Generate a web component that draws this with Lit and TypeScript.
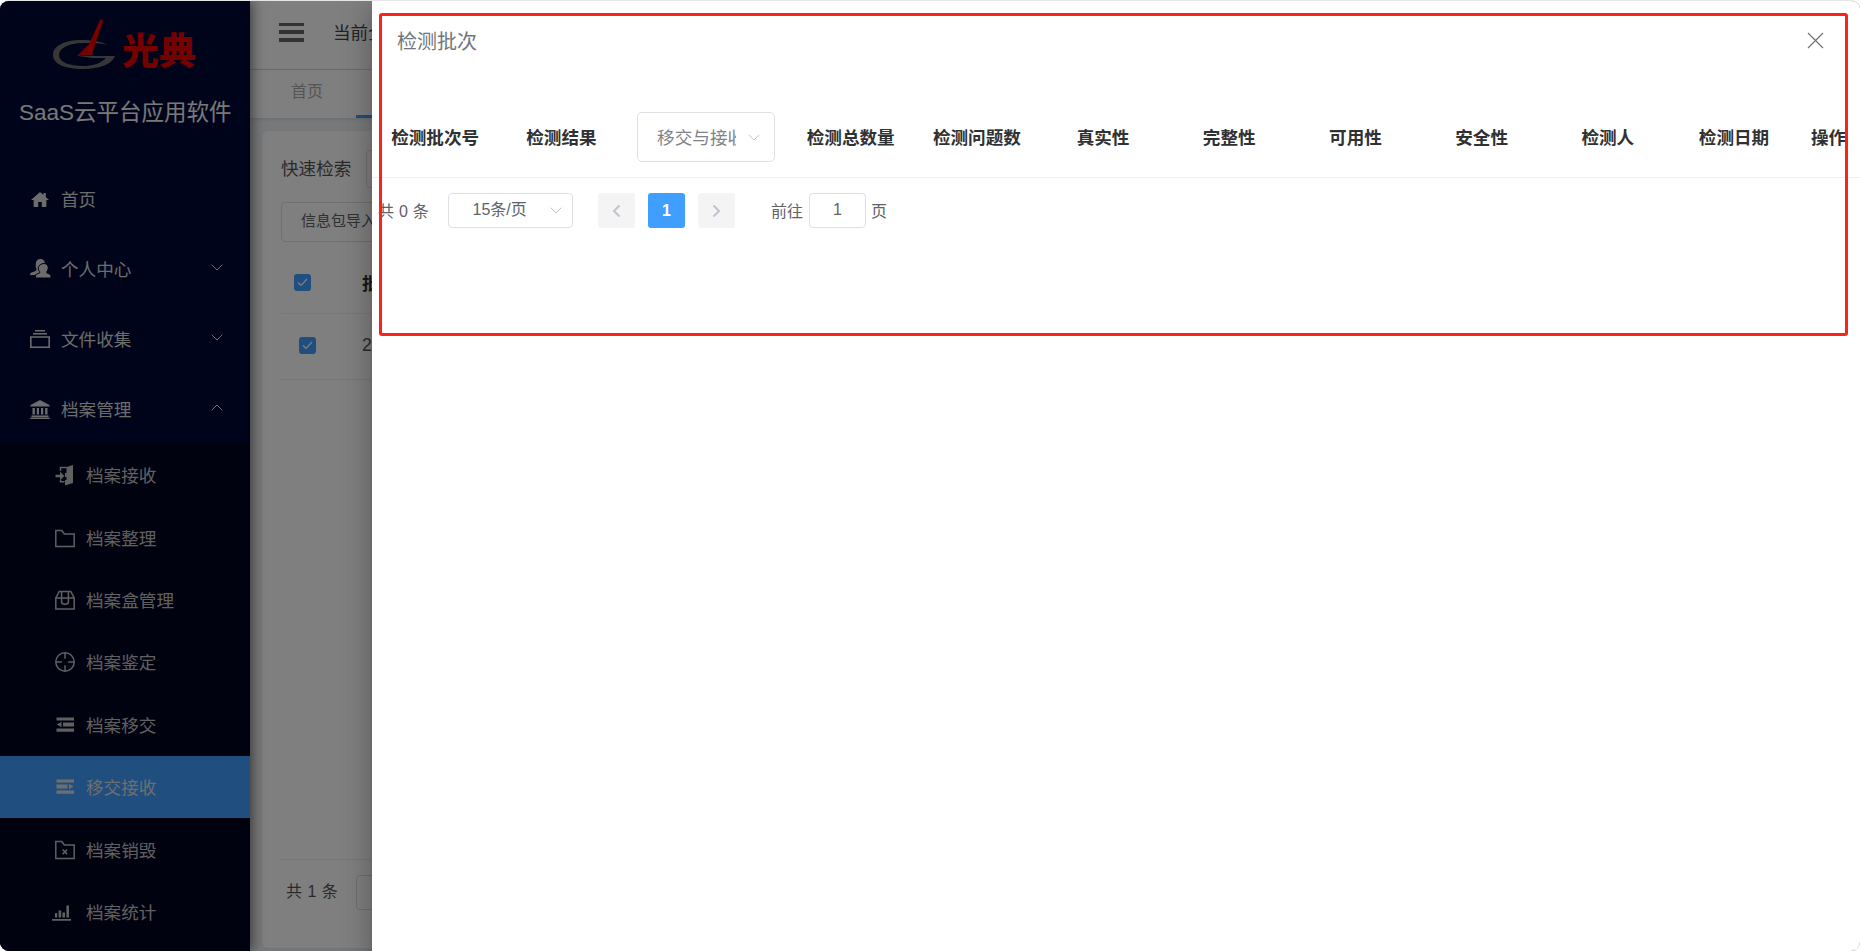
import { LitElement, html, css, svg } from "lit";
import { customElement } from "lit/decorators.js";

const I: Record<string, any> = {
  home: svg`<path fill="currentColor" d="M10 3 1 11h2.600v7h4.600v-5h3.600v5h4.600v-7H19l-3.200-2.900V4h-2.400v1.900z"/>`,
  user: svg`<path fill="currentColor" d="M10.500 0c2.700 0 4.500 2 4.500 4.800 0 1.600-.7 3.200-1.700 4.200v1.400c1 .4 1.700.8 2 1.400L5 16H0c-.2-1.200.6-2.100 2-2.700 1.600-.7 3.600-1.100 4.300-1.900V9.200C5.400 8.200 5.800 6.500 5.800 4.800 5.800 2 7.800 0 10.500 0z"/><path fill="currentColor" stroke="#00042a" stroke-width="1" d="M14 4.500c2.600 0 4.300 1.900 4.300 4.400 0 1.500-.6 2.900-1.500 3.800v1.200c1.700.8 4.200 1.200 4.200 3.100V19H5.500v-2c0-1.800 2.500-2.400 4.200-3.100v-1.200c-.9-.9-1.500-2.300-1.500-3.800 0-2.500 3.200-4.400 5.800-4.400z"/>`,
  stack: svg`<path fill="none" stroke="currentColor" stroke-width="1.600" d="M.8 8h18.400v10.200H.8zM3 4.800h14M5 1.800h10"/>`,
  bank: svg`<path fill="currentColor" d="M10 1 .5 6v1.500h19V6zM2.500 9h2.400v6.500H2.500zm4.300 0h2.200v6.500H6.800zm4.200 0h2.200v6.500H11zm4.100 0h2.400v6.500h-2.400zM1.500 16.500h17v1.400h-17zM.5 18.500h19V20H.5z"/>`,
  door: svg`<path fill="currentColor" d="M10 2.500 18 0v18l-8 2.500v-5.600h1.500V12H10V8h1.500V2.800zM5 6.800v3H.5v2.400H5v3l4.500-4.200z"/><path fill="none" stroke="currentColor" stroke-width="1.500" d="M11.500 2.500h-6V6M5.500 15v1.800h4"/>`,
  folder: svg`<path fill="none" stroke="currentColor" stroke-width="1.500" d="M.8 2.500v16h18.400V6h-9.800L6.800 2.500z"/>`,
  box: svg`<path fill="none" stroke="currentColor" stroke-width="1.500" d="M.8 8h18.400v11H.8zM.8 8l3.400-6.500h11.600L19.200 8M6.600 1.500V12c0 1.500 1 2.200 3.400 2.200s3.400-.7 3.400-2.200V1.500M6.600 8h6.800"/>`,
  target: svg`<circle cx="10" cy="10" r="9.200" fill="none" stroke="currentColor" stroke-width="1.500"/><path stroke="currentColor" stroke-width="1.500" d="M10 .8v6M10 13.200v6M.8 10h6M13.200 10h6"/>`,
  outdent: svg`<path fill="currentColor" d="M1.500 2.500h17.500v3H1.500zM8 7.500h11v4H8zM1.500 13.500H19v3.200H1.500zM6.500 6.800v5.500L2 9.500z"/>`,
  indent: svg`<path fill="currentColor" d="M1.500 2.500H19v3H1.500zM1.500 7.500h11v4h-11zM1.500 13.500H19v3.200H1.500zM14 6.800v5.500l4.500-2.800z"/>`,
  fx: svg`<path fill="none" stroke="currentColor" stroke-width="1.500" d="M.8 1.500v17h18.400V5H9.400L6.800 1.500z"/><path stroke="currentColor" stroke-width="1.500" d="m7.600 9.500 4.600 4.600M12.200 9.500l-4.600 4.600"/>`,
  chart: svg`<path fill="currentColor" d="M-3 17h19v1.800H-3zM0 11h2.200v4.500H0zM3.600 8.500h2.600v7H3.600zM7.400 10.500H10v5H7.400zM11.400 3.500H14v12h-2.600z"/>`,
};

const top1 = [
  { t: "首页", i: "home" },
  { t: "个人中心", i: "user", c: "d" },
  { t: "文件收集", i: "stack", c: "d" },
  { t: "档案管理", i: "bank", c: "u" },
];
const subs = [
  { t: "档案接收", i: "door" },
  { t: "档案整理", i: "folder" },
  { t: "档案盒管理", i: "box" },
  { t: "档案鉴定", i: "target" },
  { t: "档案移交", i: "outdent" },
  { t: "移交接收", i: "indent", a: true },
  { t: "档案销毁", i: "fx" },
  { t: "档案统计", i: "chart" },
];
const colsA = ["检测批次号", "检测结果"];
const colsB = ["检测总数量", "检测问题数", "真实性", "完整性", "可用性", "安全性", "检测人", "检测日期", "操作"];

const chevron = (up = false) => html`<svg class="chev" viewBox="0 0 12 7"><path fill="none" stroke="currentColor" stroke-width="1" d=${up ? "M.7 6.300 6 1l5.300 5.300" : "M.7.700 6 6 11.300.700"}/></svg>`;

@customElement("app-root")
export class AppRoot extends LitElement {
  static styles = css`
    :host { display: block; height: 951px; background: #fff; font-family: "Liberation Sans", "Noto Sans CJK SC", sans-serif; }
    .frame { position: relative; height: 950px; border-top: 1px solid #e6e6e6; border-radius: 9px; overflow: hidden; display: flex; background: #f0f2f5; }
    .side { width: 250px; flex: none; background: #000834; box-shadow: 2px 0 12px rgba(0,0,0,.55); z-index: 1; display: flex; flex-direction: column; color: #d8d8d8; }
    .brand { height: 163px; flex: none; display: flex; flex-direction: column; align-items: flex-start; }
    .logo { display: flex; align-items: flex-start; height: 58px; margin: 14px 0 0 50px; }
    .logo svg { width: 70px; height: 58px; display: block; flex: none; }
    .logo span { font-size: 37px; line-height: 40px; font-weight: 900; color: #e80000; margin: 18px 0 0 2px; white-space: nowrap; }
    .sys { font-size: 22.500px; line-height: 32px; color: #f0f0f0; margin: 24px 0 0 19px; white-space: nowrap; }
    .item { height: 70px; display: flex; align-items: center; padding-left: 30px; font-size: 17.600px; position: relative; }
    .item span { padding-bottom: 2px; }
    .sub span { padding-bottom: 1px; }
    .ico { width: 20px; height: 20px; flex: none; display: block; margin-right: 11px; overflow: visible; }
    .chev { width: 12px; height: 7px; position: absolute; right: 27px; top: 30px; }
    .submenu { background: #000420; flex: 1; }
    .sub { height: 62.400px; display: flex; align-items: center; padding-left: 55px; font-size: 17.600px; color: #c0c0c0; }
    .sub.on { background: #409eff; color: #ddd; }
    .main { flex: 1; display: flex; flex-direction: column; min-width: 0; }
    .bar { height: 62px; padding-bottom: 6px; flex: none; background: #fff; border-bottom: 1px solid #ddd; display: flex; align-items: center; padding-left: 29px; color: #444; font-size: 17.600px; white-space: nowrap; gap: 29px; }
    .bar span { padding-bottom: 2px; }
    .burger { width: 25px; height: 19px; flex: none; display: flex; flex-direction: column; justify-content: space-between; }
    .burger i { height: 3.500px; background: #666; display: block; }
    .tabs { height: 48px; flex: none; background: #fff; display: flex; box-shadow: 0 1px 4px rgba(0,0,0,.12); font-size: 16px; color: #aaa; line-height: 44px; }
    .tab { width: 106px; padding-left: 41px; box-sizing: border-box; }
    .tab2 { width: 120px; border-bottom: 3px solid #409eff; height: 45px; }
    .card { flex: 1; margin: 13px 12px 3px; padding: 19px 19px 0; background: #fff; border-radius: 6px; display: flex; flex-direction: column; font-size: 17.600px; color: #555; box-shadow: 0 1px 4px rgba(0,0,0,.06); }
    .search { display: flex; align-items: center; height: 38px; gap: 15px; flex: none; white-space: nowrap; }
    .search span { padding-bottom: 3px; }
    .field { width: 220px; height: 36px; border: 1px solid #dcdfe6; border-radius: 4px; flex: none; }
    .imp { width: 140px; height: 38px; margin-top: 14px; border: 1px solid #dcdfe6; border-radius: 4px; font-size: 15px; line-height: 36px; padding-left: 19px; color: #606266; flex: none; }
    .tr { display: flex; align-items: center; border-bottom: 1px solid #ebeef5; flex: none; }
    .tr.h { height: 61px; padding-top: 10px; font-weight: 700; color: #333; padding-left: 13px; }
    .tr.b { height: 63px; padding-bottom: 2px; padding-left: 18px; color: #555; }
    .ck { width: 17px; height: 17px; background: #409eff; border-radius: 3px; flex: none; display: flex; align-items: center; justify-content: center; }
    .ck svg { width: 11px; height: 9px; display: block; }
    .tr.h .ck { margin-right: 51px; }
    .tr.b .ck { margin-right: 46px; }
    .grow { flex: 1; }
    .foot { height: 73px; padding: 15px 0 0 5px; flex: none; border-top: 1px solid #ebeef5; display: flex; align-items: flex-start; gap: 18px; font-size: 16px; white-space: nowrap; line-height: 34px; word-spacing: 1px; }
    .foot .f2 { width: 120px; height: 33px; border: 1px solid #dcdfe6; border-radius: 4px; flex: none; }
    .dim { position: absolute; inset: 0; background: rgba(0,0,0,.5); z-index: 2; }
    .drawer { position: absolute; left: 372px; right: 0; top: 0; bottom: 0; background: #fff; z-index: 3; box-shadow: 0 8px 10px -5px rgba(0,0,0,.2), 0 16px 24px 2px rgba(0,0,0,.14), 0 6px 30px 5px rgba(0,0,0,.12); display: flex; flex-direction: column; overflow: hidden; }
    .dh { height: 96px; flex: none; display: flex; justify-content: space-between; padding: 27px 36px 0 25px; box-sizing: border-box; color: #72767b; font-size: 20px; line-height: 28px; }
    .x { width: 17px; height: 17px; display: block; margin-top: 4px; }
    .thead { height: 80px; flex: none; border-bottom: 1px solid #ebeef5; display: grid; grid-template-columns: 126.300px 126.300px 163px repeat(8, 126.200px) 1fr; align-items: center; font-size: 17.600px; font-weight: 700; color: #303133; }
    .th { text-align: center; white-space: nowrap; min-width: 0; padding-bottom: 2px; }
    .sel { height: 50px; width: 138px; margin-left: 12.500px; box-sizing: border-box; border: 1px solid #dcdfe6; border-radius: 5px; display: flex; align-items: center; padding-left: 19px; position: relative; font-weight: 400; color: #808288; }
    .sel span { width: 79px; overflow: hidden; white-space: nowrap; display: block; padding-bottom: 2px; }
    .sel .chev { right: 14px; top: 21px; color: #c0c4cc; }
    .pager { display: flex; align-items: center; height: 35px; margin: 15px 0 0 6px; font-size: 16px; color: #606266; white-space: nowrap; }
    .pager > span { padding-bottom: 2px; }
    .total { width: 70px; flex: none; word-spacing: .5px; }
    .psel { width: 125px; height: 35px; box-sizing: border-box; border: 1px solid #dcdfe6; border-radius: 4px; padding-left: 23.500px; line-height: 31px; position: relative; flex: none; margin-right: 25px; }
    .psel .chev { right: 10px; top: 13px; color: #c0c4cc; }
    .pg { width: 37px; height: 35px; background: #f4f4f5; border-radius: 3px; display: flex; align-items: center; justify-content: center; margin-right: 13px; flex: none; color: #c0c4cc; }
    .pg svg { width: 9px; height: 14px; display: block; }
    .pg.cur { background: #409eff; color: #fff; font-weight: 700; }
    .goto { margin-left: 23px; margin-right: 6px; }
    .inp { width: 57px; height: 35px; box-sizing: border-box; border: 1px solid #dcdfe6; border-radius: 4px; text-align: center; line-height: 31px; margin-right: 5px; flex: none; }
    .red { position: absolute; left: 379px; top: 12px; width: 1469px; height: 323px; box-sizing: border-box; border: 3px solid #ff2016; border-radius: 3px; z-index: 4; pointer-events: none; }
  `;

  render() {
    const ck = html`<span class="ck"><svg viewBox="0 0 11 9"><path fill="none" stroke="#fff" stroke-width="1.200" d="M1 4.500 4 7.500 10 1"/></svg></span>`;
    const ico = (n: string) => html`<svg class="ico" viewBox="0 0 20 20">${I[n]}</svg>`;
    return html`<div class="frame">
      <aside class="side">
        <div class="brand">
          <div class="logo">
            <svg viewBox="0 0 70 58">
              <path fill="#6c6c6c" d="M58 30C50 26 41 25 32 25 14 25 3 31 3 40c0 9 12 14 30 14 17 0 29-5 32-13H28l15 2h13c-6 6-14 8-23 8C19 51 9 47 9 40c0-7 10-12 24-12 9 0 17 0 25 2z"/>
              <path fill="#e80000" d="M50 5c1-1 3-1 3 1l-8 24-3 10-15 1 12-12z"/>
            </svg>
            <span>光典</span>
          </div>
          <div class="sys">SaaS云平台应用软件</div>
        </div>
        ${top1.map((m) => html`<div class="item">${ico(m.i)}<span>${m.t}</span>${m.c ? chevron(m.c === "u") : ""}</div>`)}
        <div class="submenu">
          ${subs.map((s) => html`<div class="sub ${s.a ? "on" : ""}">${ico(s.i)}<span>${s.t}</span></div>`)}
        </div>
      </aside>
      <div class="main">
        <div class="bar"><div class="burger"><i></i><i></i><i></i></div><span>当前全宗：光典档案</span></div>
        <div class="tabs"><div class="tab">首页</div><div class="tab2"></div></div>
        <div class="card">
          <div class="search"><span>快速检索</span><div class="field"></div></div>
          <div class="imp">信息包导入</div>
          <div class="tr h">${ck}<span>批次号</span></div>
          <div class="tr b">${ck}<span>2021</span></div>
          <div class="grow"></div>
          <div class="foot"><span>共 1 条</span><div class="f2"></div></div>
        </div>
      </div>
      <div class="dim"></div>
      <section class="drawer">
        <div class="dh"><span>检测批次</span>
          <svg class="x" viewBox="0 0 17 17"><path fill="none" stroke="currentColor" stroke-width="1.300" d="m1 1 15 15M16 1 1 16"/></svg>
        </div>
        <div class="thead">
          ${colsA.map((c) => html`<div class="th">${c}</div>`)}
          <div class="sel"><span>移交与接收</span>${chevron()}</div>
          ${colsB.map((c) => html`<div class="th">${c}</div>`)}
        </div>
        <div class="pager">
          <span class="total">共 0 条</span>
          <div class="psel">15条/页${chevron()}</div>
          <div class="pg"><svg viewBox="0 0 9 14"><path fill="none" stroke="currentColor" stroke-width="2" d="M7.500 1.500 2 7l5.500 5.500"/></svg></div>
          <div class="pg cur">1</div>
          <div class="pg"><svg viewBox="0 0 9 14"><path fill="none" stroke="currentColor" stroke-width="2" d="M1.500 1.500 7 7l-5.500 5.500"/></svg></div>
          <span class="goto">前往</span>
          <div class="inp">1</div>
          <span>页</span>
        </div>
      </section>
      <div class="red"></div>
    </div>`;
  }
}
